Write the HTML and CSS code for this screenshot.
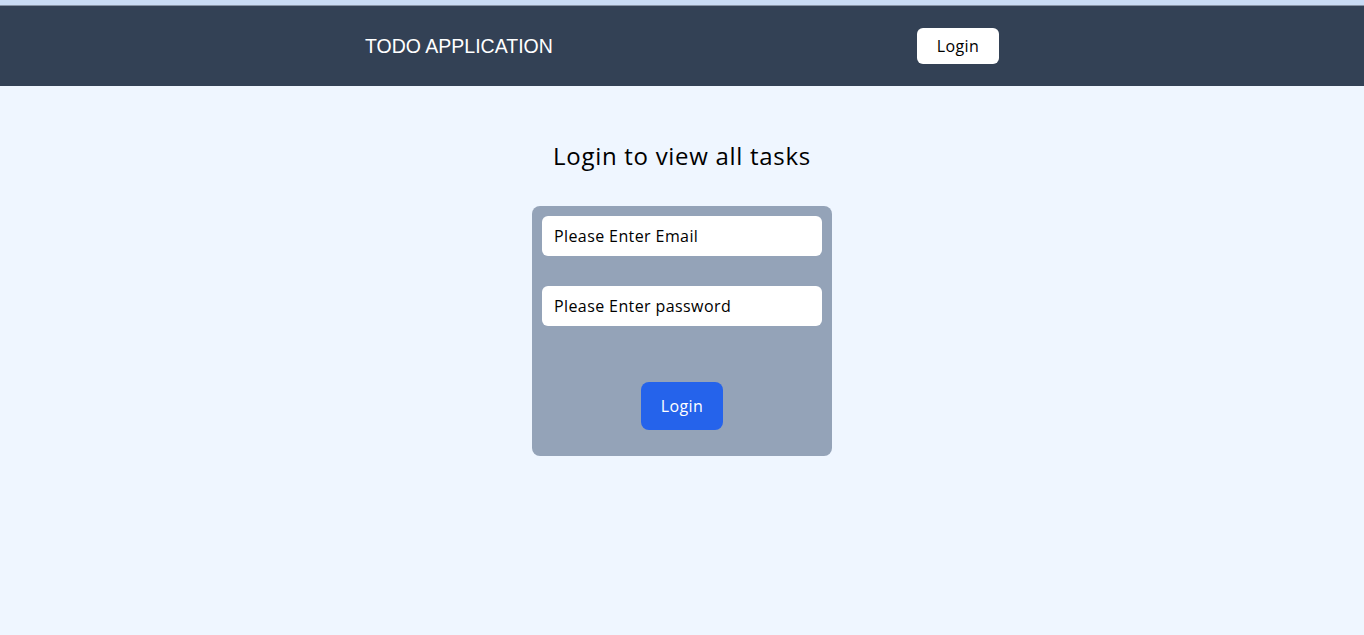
FILE: index.html
```html
<!DOCTYPE html>
<html>
<head>
<meta charset="utf-8">
<link rel="stylesheet" href="styles.css">
</head>
<body>
<div class="topstrip"></div>
<header class="navbar">
  <div class="nav-inner">
    <div class="brand">TODO APPLICATION</div>
    <button class="nav-btn">Login</button>
  </div>
</header>
<main class="main">
  <h1 class="title">Login to view all tasks</h1>
  <form class="card">
    <input class="field" type="text" placeholder="Please Enter Email">
    <input class="field" type="password" placeholder="Please Enter password">
    <button class="submit" type="button">Login</button>
  </form>
</main>
</body>
</html>
```
FILE: styles.css
```css
* { box-sizing: border-box; }
html, body { margin: 0; padding: 0; }
body {
  background: #eff6ff;
  font-family: "Open Sans", "Noto Sans", sans-serif;
  color: #000;
  height: 635px;
}
.topstrip {
  height: 6px;
  background: #c9dbf4;
  border-bottom: 1px solid #8793a5;
}
.navbar {
  background: #334155;
  height: 80px;
  display: flex;
  align-items: center;
  justify-content: center;
}
.nav-inner {
  width: 634px;
  display: flex;
  justify-content: space-between;
  align-items: center;
}
.brand {
  color: #fff;
  font-family: "Liberation Sans", Arial, sans-serif;
  font-size: 19.5px;
}
.nav-btn {
  background: #fff;
  border: none;
  border-radius: 6px;
  width: 82px;
  height: 36px;
  font-family: "Open Sans", sans-serif;
  font-size: 16px;
  letter-spacing: 0.4px;
  color: #000;
  padding: 0;
}
.main {
  display: flex;
  flex-direction: column;
  align-items: center;
}
.title {
  margin: 55px 0 0 0;
  font-size: 24px;
  letter-spacing: 0.7px;
  font-weight: 400;
  line-height: 30px;
}
.card {
  margin-top: 35px;
  width: 300px;
  height: 250px;
  background: #94a3b8;
  border-radius: 8px;
  padding: 10px;
  display: flex;
  flex-direction: column;
  align-items: center;
}
.field {
  width: 280px;
  height: 40px;
  border: none;
  border-radius: 6px;
  background: #fff;
  padding: 0 12px;
  font-family: "Open Sans", sans-serif;
  font-size: 16px;
  letter-spacing: 0.4px;
  margin-bottom: 30px;
  outline: none;
}
.field::placeholder { color: #000; opacity: 1; }
.submit {
  margin-top: 26px;
  width: 82px;
  height: 48px;
  background: #2563eb;
  color: #fff;
  border: none;
  border-radius: 8px;
  font-family: "Open Sans", sans-serif;
  font-size: 16px;
  letter-spacing: 0.4px;
  padding: 0;
}
```
